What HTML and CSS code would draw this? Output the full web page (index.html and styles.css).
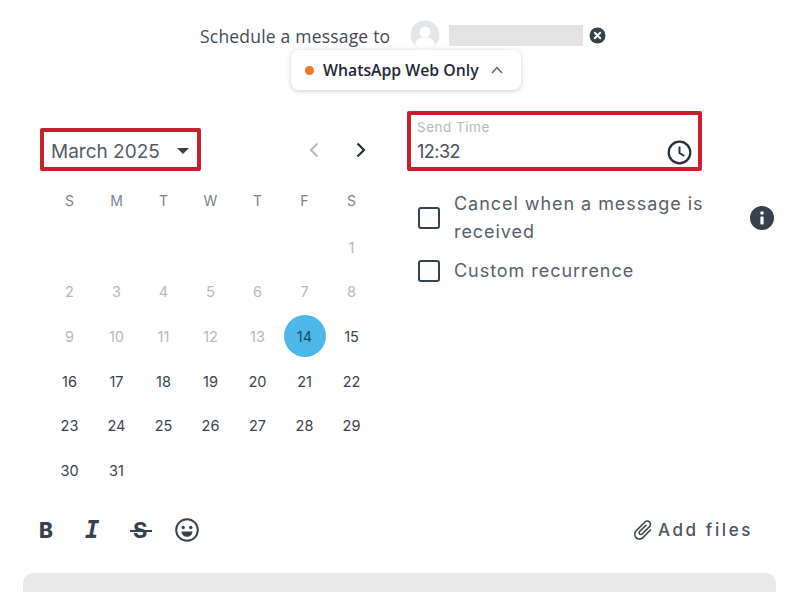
FILE: index.html
```html
<html>
<head>
    <title>Schedule a message</title>
    <link rel="stylesheet" href="styles.css">
</head>
<body>
    <div class="header">
        <span class="header-title">Schedule a message to</span>
        <svg class="avatar" width="30" height="30" viewBox="0 0 30 30">
            <circle cx="15" cy="15" r="14.5" fill="#e3e6e8"/>
            <circle cx="15" cy="12" r="5.5" fill="#fff"/>
            <path d="M5 25c1-6 5-7.500 10-7.500s9 1.500 10 7.500c-2.500 2.800-6 4.300-10 4.300s-7.500-1.500-10-4.300z" fill="#fff"/>
        </svg>
        <span class="contact-name"></span>
        <svg class="contact-remove" width="17" height="17" viewBox="0 0 17 17">
            <circle cx="8.500" cy="8.500" r="8" fill="#36424e"/>
            <path d="M5.800 5.800l5.400 5.400M11.200 5.800l-5.400 5.400" stroke="#fff" stroke-width="2" stroke-linecap="round"/>
        </svg>
    </div>
    <div class="pill-row">
        <div class="pill">
            <span class="pill-dot"></span>
            <span class="pill-text">WhatsApp Web Only</span>
            <svg width="12" height="8" viewBox="0 0 12 8">
                <path d="M1 7l5-5.500 5 5.500" fill="none" stroke="#5d6670" stroke-width="1.500"/>
            </svg>
        </div>
    </div>

    <div class="columns">
        <div class="calendar">
            <div class="calendar-top">
                <div class="month-box">
                    <span class="month-label">March 2025</span>
                    <span class="month-caret"></span>
                </div>
                <div class="month-nav">
                    <svg width="12" height="16" viewBox="0 0 12 16">
                        <path d="M9.500 1.500L3 8l6.500 6.500" fill="none" stroke="#b9bdc1" stroke-width="2.200"/>
                    </svg>
                    <svg width="12" height="16" viewBox="0 0 12 16">
                        <path d="M2.500 1.500L9 8l-6.500 6.500" fill="none" stroke="#27313a" stroke-width="2.200"/>
                    </svg>
                </div>
            </div>
            <div class="calendar-grid">
                <span class="weekday">S</span><span class="weekday">M</span><span class="weekday">T</span><span class="weekday">W</span><span class="weekday">T</span><span class="weekday">F</span><span class="weekday">S</span>
                <span></span><span></span><span></span><span></span><span></span><span></span><span class="day past">1</span>
                <span class="day past">2</span><span class="day past">3</span><span class="day past">4</span><span class="day past">5</span><span class="day past">6</span><span class="day past">7</span><span class="day past">8</span>
                <span class="day past">9</span><span class="day past">10</span><span class="day past">11</span><span class="day past">12</span><span class="day past">13</span><span class="day today"><b>14</b></span><span class="day">15</span>
                <span class="day">16</span><span class="day">17</span><span class="day">18</span><span class="day">19</span><span class="day">20</span><span class="day">21</span><span class="day">22</span>
                <span class="day">23</span><span class="day">24</span><span class="day">25</span><span class="day">26</span><span class="day">27</span><span class="day">28</span><span class="day">29</span>
                <span class="day">30</span><span class="day">31</span>
            </div>
        </div>

        <div class="options">
            <div class="time-box">
                <div class="time-fields">
                    <span class="time-label">Send Time</span>
                    <span class="time-value">12:32</span>
                </div>
                <svg width="25" height="25" viewBox="0 0 25 25">
                    <circle cx="12.500" cy="12.500" r="10.800" fill="none" stroke="#27313a" stroke-width="2.200"/>
                    <path d="M12.500 6.500v6.500l4.800 3" fill="none" stroke="#27313a" stroke-width="2"/>
                </svg>
            </div>
            <div class="option option-wide">
                <span class="checkbox"></span>
                <span class="option-text">Cancel when a message is received</span>
                <svg class="info" width="24" height="24" viewBox="0 0 24 24">
                    <circle cx="12" cy="12" r="12" fill="#36424e"/>
                    <circle cx="12" cy="7" r="1.800" fill="#fff"/>
                    <rect x="10.400" y="10.500" width="3.200" height="8" rx="1" fill="#fff"/>
                </svg>
            </div>
            <div class="option">
                <span class="checkbox"></span>
                <span class="option-text">Custom recurrence</span>
            </div>
        </div>
    </div>

    <div class="toolbar">
        <div class="format-tools">
            <span class="tool tool-bold">B</span>
            <span class="tool tool-italic">I</span>
            <span class="tool tool-strike">S</span>
            <svg class="tool-emoji" width="24" height="24" viewBox="0 0 24 24">
                <circle cx="12" cy="12" r="10.800" fill="none" stroke="#36424e" stroke-width="2"/>
                <circle cx="8.200" cy="9.500" r="1.700" fill="#36424e"/>
                <circle cx="15.800" cy="9.500" r="1.700" fill="#36424e"/>
                <path d="M6.500 13.500h11c0 3.200-2.500 5.300-5.500 5.300s-5.500-2.100-5.500-5.300z" fill="#36424e"/>
            </svg>
        </div>
        <div class="add-files">
            <svg width="24" height="24" viewBox="0 0 24 24">
                <path transform="rotate(45 12 12)" d="M16.500 6v11.500c0 2.210-1.790 4-4 4s-4-1.790-4-4V5c0-1.380 1.120-2.500 2.500-2.500s2.500 1.120 2.500 2.500v10.500c0 .55-.45 1-1 1s-1-.45-1-1V6H10v9.500c0 1.380 1.120 2.500 2.500 2.500s2.500-1.120 2.500-2.500V5c0-2.210-1.790-4-4-4S7 2.790 7 5v12.500c0 3.040 2.460 5.500 5.500 5.500s5.500-2.460 5.500-5.500V6h-1.500z" fill="#36424e"/>
            </svg>
            <span>Add files</span>
        </div>
    </div>

    <div class="composer"></div>
</body>
</html>
```

FILE: styles.css
```css
html{
    overflow: hidden;
}
body{
    margin: 0;
    height: 592px;
    background-color: white;
    font-family: 'Inter', 'Noto Sans', sans-serif;
    color: #36424e;
}
.header{
    display: flex;
    align-items: center;
    height: 30px;
    padding: 20px 0 0 200px;
}
.header-title{
    font-family: 'Open Sans', sans-serif;
    font-size: 17.500px;
    letter-spacing: 0.2px;
    color: #3f4a55;
    width: 210px;
    padding-top: 2px;
}
.avatar{
    flex: none;
}
.contact-name{
    width: 134px;
    height: 21px;
    margin-left: 9px;
    background-color: #e3e3e3;
}
.contact-remove{
    margin-left: 6px;
}
.pill-row{
    display: flex;
    justify-content: center;
    padding-left: 12px;
    height: 41px;
}
.pill{
    display: flex;
    align-items: center;
    width: 230px;
    height: 40px;
    box-sizing: border-box;
    padding-left: 14px;
    background-color: white;
    border-radius: 8px;
    box-shadow: 0 1px 5px rgba(0, 0, 0, 0.2);
}
.pill-dot{
    width: 9px;
    height: 9px;
    border-radius: 50%;
    background-color: #ee7a2c;
}
.pill-text{
    font-family: 'Open Sans', sans-serif;
    font-weight: 600;
    font-size: 15.800px;
    color: #1f2a35;
    margin: 0 12px 0 9px;
}
.columns{
    display: flex;
    height: 404px;
    padding-top: 20px;
}
.calendar{
    width: 407px;
    flex: none;
    padding-top: 17px;
    box-sizing: border-box;
}
.calendar-top{
    display: flex;
    justify-content: space-between;
    align-items: center;
    padding: 0 40px 0 40px;
}
.month-box{
    display: flex;
    align-items: center;
    justify-content: space-between;
    width: 161px;
    height: 43px;
    box-sizing: border-box;
    padding: 3px 8px 0 7px;
    border: 4px solid #c8202f;
    border-radius: 2px;
}
.month-label{
    font-size: 19px;
    color: #515b65;
}
.month-caret{
    width: 0;
    height: 0;
    border-left: 6px solid transparent;
    border-right: 6px solid transparent;
    border-top: 6px solid #36424e;
}
.month-nav{
    display: flex;
    gap: 35px;
}
.calendar-grid{
    display: grid;
    grid-template-columns: repeat(7, 47px);
    grid-template-rows: 46.700px;
    grid-auto-rows: 44.700px;
    margin: 7px 0 0 46px;
    font-size: 14.500px;
    text-align: center;
}
.calendar-grid span{
    display: flex;
    align-items: center;
    justify-content: center;
}
.calendar-grid .weekday{
    color: #7b8289;
    font-size: 14px;
    padding-bottom: 2px;
}
.day{
    color: #3a434c;
}
.past{
    color: #b5b9bd;
}
.today b{
    display: flex;
    align-items: center;
    justify-content: center;
    flex: none;
    width: 42px;
    height: 42px;
    font-weight: normal;
    border-radius: 50%;
    background-color: #4db7ea;
    color: #1d4a63;
}
.options{
    width: 373px;
}
.time-box{
    display: flex;
    align-items: flex-end;
    justify-content: space-between;
    width: 295px;
    height: 60px;
    box-sizing: border-box;
    padding: 0 6px 2px 6px;
    border: 4px solid #c8202f;
    border-radius: 2px;
}
.time-fields{
    display: flex;
    flex-direction: column;
    padding-bottom: 1px;
}
.time-label{
    font-size: 13.500px;
    letter-spacing: 0.5px;
    color: #b5b9bd;
    margin-bottom: 5px;
}
.time-value{
    font-size: 18px;
    letter-spacing: -0.5px;
    color: #46515c;
    line-height: 24px;
}
.option{
    display: flex;
    align-items: center;
    gap: 14px;
    padding-left: 11px;
    font-size: 18px;
    letter-spacing: 0.950px;
    line-height: 28px;
    color: #56606a;
    margin-top: 11px;
}
.option-wide{
    margin-top: 19px;
}
.option-text{
    width: 282px;
}
.checkbox{
    flex: none;
    width: 18px;
    height: 18px;
    border: 2.500px solid #36424e;
    border-radius: 3px;
}
.toolbar{
    display: flex;
    align-items: center;
    justify-content: space-between;
    height: 30px;
    padding: 0 47px 0 39px;
}
.format-tools{
    display: flex;
    align-items: center;
}
.tool{
    width: 47px;
    font-size: 22px;
    color: #36424e;
}
.tool-bold{
    font-weight: 800;
    font-size: 21px;
}
.tool-italic{
    font-family: 'DejaVu Sans Mono', monospace;
    font-weight: bold;
    font-style: italic;
    font-size: 24px;
    margin-left: -1px;
}
.tool-strike{
    position: relative;
    font-weight: 700;
    padding-left: 1px;
    width: 46px;
}
.tool-strike::after{
    content: "";
    position: absolute;
    left: -2px;
    top: 13px;
    width: 22px;
    height: 2px;
    background-color: #36424e;
}
.tool-emoji{
    margin-left: -4px;
}
.add-files{
    display: flex;
    align-items: center;
    gap: 3px;
    font-size: 17px;
    font-weight: 500;
    letter-spacing: 2.600px;
    color: #4a555f;
}
.composer{
    margin: 28px 24px 0 23px;
    height: 19px;
    background-color: #e8e8e8;
    border-radius: 10px 10px 0 0;
}
```
